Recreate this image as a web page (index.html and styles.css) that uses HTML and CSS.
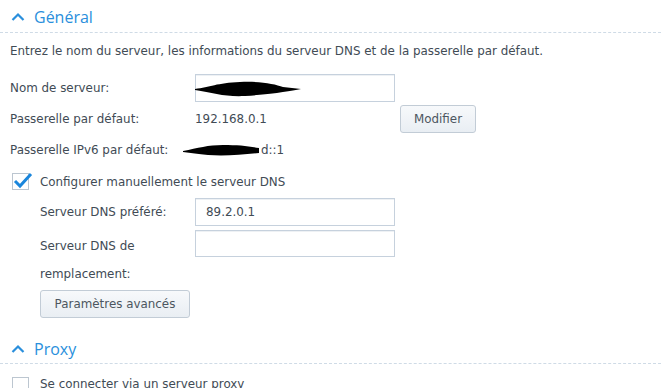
FILE: index.html
```html
<!DOCTYPE html>
<html lang="fr">
<head>
<meta charset="utf-8">
<link rel="stylesheet" href="styles.css">
</head>
<body>
<section class="section">
  <div class="sec-head">
    <svg class="chev" width="14" height="10" viewBox="0 0 14 10"><path d="M1.5 8 L7 2.5 L12.5 8" fill="none" stroke="#2a8fdc" stroke-width="2.2"/></svg>
    <span class="sec-title">Général</span>
  </div>
  <div class="sec-body">
    <p class="desc">Entrez le nom du serveur, les informations du serveur DNS et de la passerelle par défaut.</p>
    <div class="row r1">
      <span class="label">Nom de serveur:</span>
      <div class="input">
        <svg class="redact" width="110" height="20" viewBox="0 0 110 20"><path d="M0 10 C15 8 22 4 45 3 C65 2 80 5 88 8 L106 10 C95 12 80 15 50 17 C30 18 18 14 0 11 Z" fill="#000"/></svg>
      </div>
    </div>
    <div class="row r2">
      <span class="label">Passerelle par défaut:</span>
      <span class="value">192.168.0.1</span>
      <button class="btn btn-mod">Modifier</button>
    </div>
    <div class="row r3">
      <span class="label">Passerelle IPv6 par défaut:</span>
      <span class="value ipv6"><svg class="redact2" width="78" height="14" viewBox="0 0 78 14"><path d="M0 8 C15 5 25 2 40 2 C55 2 65 3 76 5 L76 10 C60 12 40 13 25 12 C15 11 8 10 0 9 Z" fill="#000"/></svg><span class="v6tail">d::1</span></span>
    </div>
    <div class="row r4">
      <span class="check on"><svg width="22" height="20" viewBox="0 0 22 20"><path d="M3 10 L8 15 L19 3" fill="none" stroke="#1a86dc" stroke-width="3"/></svg></span>
      <span class="check-label">Configurer manuellement le serveur DNS</span>
    </div>
    <div class="sub">
      <div class="row r5">
        <span class="label sublabel">Serveur DNS préféré:</span>
        <div class="input"><span class="in-text">89.2.0.1</span></div>
      </div>
      <div class="row r6">
        <span class="label sublabel wrap">Serveur DNS de<br>remplacement:</span>
        <div class="input"></div>
      </div>
      <button class="btn btn-adv">Paramètres avancés</button>
    </div>
  </div>
</section>
<section class="section proxy">
  <div class="sec-head">
    <svg class="chev" width="14" height="10" viewBox="0 0 14 10"><path d="M1.5 8 L7 2.5 L12.5 8" fill="none" stroke="#2a8fdc" stroke-width="2.2"/></svg>
    <span class="sec-title">Proxy</span>
  </div>
  <div class="sec-body">
    <div class="row r7">
      <span class="check"></span>
      <span class="check-label">Se connecter via un serveur proxy</span>
    </div>
  </div>
</section>
</body>
</html>
```
FILE: styles.css
```css
* { box-sizing: border-box; }
html, body { margin: 0; padding: 0; background: #fff; overflow: hidden; }
body {
  width: 661px;
  height: 388px;
  font-family: "DejaVu Sans", Verdana, sans-serif;
  font-size: 11.9px;
  color: #414b55;
}
.sec-head {
  height: 33px;
  display: flex;
  align-items: center;
  padding: 0 0 0 11px;
  border-bottom: 1px dashed #cfdbe6;
}
.chev { margin-right: 9px; margin-top: 2px; }
.sec-title {
  font-size: 16px;
  color: #2a8fdc;
  font-family: "Open Sans", "DejaVu Sans", sans-serif;
  line-height: 20px;
  margin-top: 2px;
}
.sec-body { padding: 0 0 0 10px; }
.desc { margin: 0; height: 37px; line-height: 37px; }
.row { display: flex; align-items: center; }
.label { width: 185px; flex: none; }
.sublabel { width: 155px; }
.input {
  width: 200px;
  height: 28px;
  border: 1px solid #c6d1dd;
  box-shadow: inset 0 1px 0 #eef1f4;
  background: #fff;
  display: flex;
  align-items: center;
  position: relative;
}
.in-text { padding-left: 10px; }
.r1 { height: 30px; margin-top: 3px; }
.redact { position: absolute; left: -1px; top: 4px; }
.r2 { height: 32px; }
.value { width: 205px; flex: none; }
.btn {
  font-family: inherit;
  font-size: 11.9px;
  color: #4c5660;
  background: linear-gradient(#f7f9fb, #e9eef3);
  border: 1px solid #c2ccd6;
  border-radius: 3px;
  height: 28px;
  padding: 0;
}
.btn-mod { width: 76px; }
.r3 { height: 33px; margin-top: -2px; }
.ipv6 { margin-left: -12px; display: flex; align-items: center; }
.redact2 { flex: none; }
.r4 { height: 29px; padding-left: 2px; margin-top: 1px; }
.check {
  width: 17px; height: 17px;
  border: 1px solid #bcc6d0;
  background: #fff;
  position: relative;
  flex: none;
  margin-right: 11px;
}
.check svg { position: absolute; left: -1px; top: -3px; }
.sub { padding-left: 30px; }
.r5 { height: 32px; margin-top: 0; }
.r6 { height: 58px; align-items: flex-start; margin-top: 1px; }
.r6 .input { height: 27px; margin-top: 1px; }
.wrap { line-height: 28px; margin-top: 3px; }
.btn-adv { width: 150px; margin-top: 3px; }
.proxy { margin-top: 15px; }
.proxy .sec-head { height: 31px; }
.r7 { height: 30px; padding-left: 2px; margin-top: 13px; align-items: flex-start; }
```
